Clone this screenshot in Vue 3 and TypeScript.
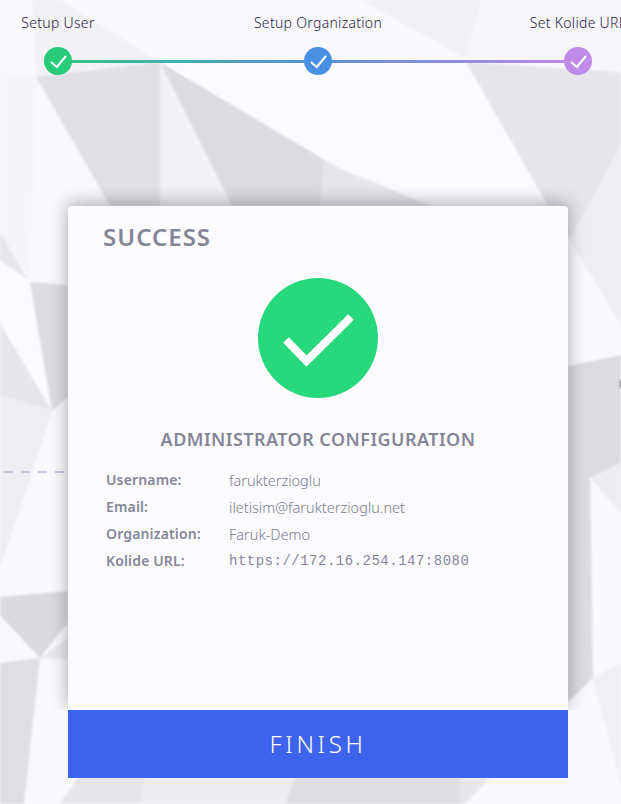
<script setup lang="ts">
interface Step {
  label: string
  color: string
}

interface Facet {
  points: string
  fill: string
}

interface ConfigRow {
  label: string
  value: string
  mono?: boolean
}

const steps: Step[] = [
  { label: 'Setup User', color: '#27cc7b' },
  { label: 'Setup Organization', color: '#4a90e2' },
  { label: 'Set Kolide URL', color: '#c08be8' }
]

const rows: ConfigRow[] = [
  { label: 'Username:', value: 'farukterzioglu' },
  { label: 'Email:', value: 'iletisim@farukterzioglu.net' },
  { label: 'Organization:', value: 'Faruk-Demo' },
  { label: 'Kolide URL:', value: 'https://172.16.254.147:8080', mono: true }
]

// low-poly backdrop, traced by eye from the reference
const facets: Facet[] = [
  { points: '32,0 60,0 160,62 36,77', fill: '#f2f2f5' },
  { points: '0,72 36,77 32,210 30,280 0,232', fill: '#f5f5f8' },
  { points: '36,77 160,62 160,206 110,206', fill: '#e1e1e5' },
  { points: '160,62 232,206 160,206', fill: '#f1f1f4' },
  { points: '160,62 325,160 320,206 232,206', fill: '#dcdce0' },
  { points: '325,160 337,167 432,206 320,206', fill: '#e6e6ea' },
  { points: '360,0 482,0 465,58', fill: '#f2f2f5' },
  { points: '482,0 621,0 621,70 465,58', fill: '#f6f6f9' },
  { points: '465,62 621,72 621,145 570,240 548,206', fill: '#e6e6ea' },
  { points: '160,62 465,60 548,206 432,206 337,167', fill: '#fbfbfe' },
  { points: '570,240 621,145 621,325', fill: '#eeeef1' },
  { points: '0,232 28,280 0,260', fill: '#e6e6ea' },
  { points: '0,260 30,282 52,411 0,323', fill: '#fbfbfe' },
  { points: '30,282 68,285 68,397 52,411', fill: '#dcdce0' },
  { points: '0,323 52,411 0,395', fill: '#e7e7eb' },
  { points: '0,395 52,411 23,500 0,567', fill: '#eeeef1' },
  { points: '0,597 68,591 68,622 40,658 0,615', fill: '#dadade' },
  { points: '40,658 68,638 68,660', fill: '#e9e9ed' },
  { points: '0,663 40,658 24,804 0,804', fill: '#dfdfe3' },
  { points: '568,366 621,355 621,463 590,478 593,678 568,702', fill: '#dcdce0' },
  { points: '590,478 621,463 621,513', fill: '#ededf0' },
  { points: '593,678 621,663 621,785', fill: '#f0f0f3' },
  { points: '78,778 146,778 140,804 60,804', fill: '#e6e6ea' },
  { points: '146,778 295,778 285,804 140,804', fill: '#ededf0' },
  { points: '295,778 460,778 460,804 285,804', fill: '#dedee2' },
  { points: '460,778 490,778 465,804 460,804', fill: '#e8e8ec' }
]
</script>

<template>
  <div class="setup">
    <svg class="setup__backdrop" viewBox="0 0 621 804" aria-hidden="true">
      <polygon v-for="facet in facets" :key="facet.points" :points="facet.points" :fill="facet.fill" />
    </svg>
    <span class="setup__dashes"></span>
    <span class="setup__edge"></span>

    <ol class="steps">
      <li v-for="step in steps" :key="step.label" class="steps__item">
        <span class="steps__label">{{ step.label }}</span>
        <span class="steps__dot" :style="{ backgroundColor: step.color }">
          <svg viewBox="0 0 28 28" width="28" height="28" aria-hidden="true">
            <path d="M7 15 L12.800 20 L22 9" fill="none" stroke="#fff" stroke-width="2" />
          </svg>
        </span>
      </li>
    </ol>

    <section class="card">
      <div class="card__body">
        <h1 class="card__title">SUCCESS</h1>
        <svg class="card__icon" viewBox="0 0 120 120" width="120" height="120" aria-hidden="true">
          <circle cx="60" cy="60" r="60" fill="#28d87c" />
          <path d="M28 62 L48.500 83 L93 39" fill="none" stroke="#fff" stroke-width="8" />
        </svg>
        <h2 class="card__heading">ADMINISTRATOR CONFIGURATION</h2>
        <dl class="config">
          <div v-for="row in rows" :key="row.label" class="config__row">
            <dt class="config__label">{{ row.label }}</dt>
            <dd class="config__value" :class="{ 'config__value--mono': row.mono }">{{ row.value }}</dd>
          </div>
        </dl>
      </div>
      <button type="button" class="card__finish">FINISH</button>
    </section>
  </div>
</template>

<style>
html,
body {
  margin: 0;
  overflow: hidden;
}
</style>

<style scoped>
.setup {
  position: relative;
  width: 621px;
  height: 804px;
  overflow: hidden;
  background-color: #f9f9fc;
  font-family: 'Noto Sans', 'Open Sans', sans-serif;
}

.setup__backdrop {
  position: absolute;
  inset: 0;
  width: 621px;
  height: 804px;
  filter: blur(0.8px);
}

.setup__dashes {
  position: absolute;
  left: 4px;
  top: 471px;
  width: 60px;
  height: 2px;
  background: repeating-linear-gradient(90deg, #c6c8e0 0 9px, transparent 9px 17px);
}

.setup__edge {
  position: absolute;
  left: 619px;
  top: 380px;
  width: 4px;
  height: 8px;
  background-color: #b4b4ba;
}

.steps {
  position: relative;
  display: flex;
  justify-content: space-between;
  width: 680px;
  height: 76px;
  margin: 0 0 0 -22px;
  padding: 13px 0 0;
  list-style: none;
  box-sizing: content-box;
}

.steps::before {
  content: '';
  position: absolute;
  left: 80px;
  right: 80px;
  top: 60px;
  height: 3px;
  background: linear-gradient(90deg, #32c985 0%, #5b8fd6 50%, #c08be8 100%);
}

.steps__item {
  position: relative;
  display: flex;
  flex-direction: column;
  align-items: center;
  gap: 15px;
  width: 160px;
}

.steps__label {
  color: #1f2347;
  font-size: 14px;
  font-weight: 300;
  letter-spacing: 0.3px;
  line-height: 19px;
  white-space: nowrap;
}

.steps__dot {
  display: block;
  width: 28px;
  height: 28px;
  border-radius: 50%;
}

.steps__dot svg {
  display: block;
}

.card {
  position: relative;
  display: flex;
  flex-direction: column;
  width: 500px;
  margin: 117px 0 0 68px;
}

.card__body {
  height: 504px;
  border-radius: 4px 4px 0 0;
  background-color: #fcfcff;
  box-shadow: 0 -3px 18px rgba(0, 0, 0, 0.32);
  clip-path: inset(-40px -40px 0 -40px);
}

.card__title {
  margin: 15px 0 0 35px;
  color: #85859a;
  font-size: 24px;
  font-weight: 600;
  letter-spacing: 1px;
  line-height: 31px;
}

.card__icon {
  display: block;
  margin: 26px auto 0;
}

.card__heading {
  margin: 29px 0 0;
  color: #85859a;
  font-size: 18px;
  font-weight: 600;
  letter-spacing: 0.45px;
  line-height: 24px;
  text-align: center;
}

.config {
  display: flex;
  flex-direction: column;
  gap: 7px;
  margin: 19px 0 0 38px;
}

.config__row {
  display: grid;
  grid-template-columns: 123px 1fr;
  line-height: 20px;
}

.config__label {
  color: #85859a;
  font-size: 14px;
  font-weight: 600;
  letter-spacing: 0.15px;
}

.config__value {
  margin: 0;
  color: #7a7a8e;
  font-size: 14.500px;
  font-weight: 300;
}

.config__value--mono {
  color: #85859a;
  font-family: 'Liberation Mono', monospace;
  font-size: 14px;
  font-weight: 400;
  letter-spacing: 0.5px;
}

.card__finish {
  width: 100%;
  height: 68px;
  padding: 0 0 2px;
  border: none;
  background-color: #3e63ee;
  color: #fff;
  font-family: inherit;
  font-size: 24px;
  font-weight: 300;
  letter-spacing: 3.700px;
  cursor: pointer;
}
</style>
